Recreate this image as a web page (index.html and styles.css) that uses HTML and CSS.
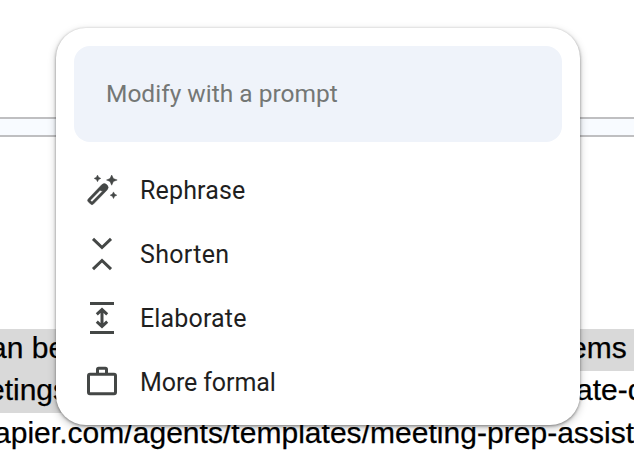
FILE: index.html
```html
<!DOCTYPE html>
<html lang="en">
<head>
  <meta charset="utf-8" />
  <title>Modify with a prompt</title>
  <link rel="stylesheet" href="styles.css">
</head>
<body>
  <div class="page">
    <div class="rule"></div>
    <div class="line selected"><span class="before">an be</span><span class="after up">ems</span></div>
    <div class="line"><span class="before half">etings</span><span class="after">ate-d</span></div>
    <div class="line url">apier.com/agents/templates/meeting-prep-assist</div>
  </div>

  <div class="popup">
    <div class="prompt">Modify with a prompt</div>
    <ul class="menu">
      <li>
        <svg class="icon wand" viewBox="0 -1.200 32 32">
          <path fill-rule="evenodd" d="M15.700 9.600Q18.300 7 20.900 9.600Q23.600 12.200 20.900 15L7.400 28.900Q6 30.300 4.600 28.900L2.200 26.500Q.8 25.100 2.200 23.700ZM14.100 15.100 4.700 24.700Q4.300 25.100 4.700 25.500L5.500 26.300Q5.900 26.700 6.300 26.300L16.900 15.600Q15.200 15.900 14.100 15.100Z"/>
          <path d="M25.700 -.2 27.400 3.400 31.200 4.800 27.400 6.200 25.700 10 24 6.200 20.500 4.800 24 3.400Z"/>
          <path d="M11.500 -.1 12.600 2.100 14.800 3.200 12.600 4.300 11.500 6.500 10.400 4.300 8.200 3.200 10.400 2.100Z"/>
          <path d="M27.500 16.700 28.600 18.900 30.800 20 28.600 21.100 27.500 23.300 26.400 21.100 24.200 20 26.400 18.900Z"/>
        </svg>
        <span>Rephrase</span>
      </li>
      <li>
        <svg class="icon stroke" viewBox="0 0 32 32">
          <path d="M7 .8 16 9.500 25 .8M7 31.200 16 22.500 25 31.200"/>
        </svg>
        <span class="wide">Shorten</span>
      </li>
      <li>
        <svg class="icon stroke" viewBox="0 0 32 32">
          <path d="M4 1.600H28M4 30.400H28M16 8V24M10.800 12.300 16 7.500 21.200 12.300M10.800 19.700 16 24.500 21.200 19.700"/>
        </svg>
        <span>Elaborate</span>
      </li>
      <li>
        <svg class="icon stroke" viewBox="0 0 32 32">
          <rect x="2.500" y="8.300" width="27" height="19.400" rx="1.500"/>
          <path d="M11.500 8V3.500Q11.500 2.300 12.700 2.300H19.300Q20.500 2.300 20.500 3.500V8"/>
        </svg>
        <span class="tight">More formal</span>
      </li>
    </ul>
  </div>
</body>
</html>
```

FILE: styles.css
```css
body {
  margin: 0;
  background: #fff;
  overflow: hidden;
}

/* document under the popup */
.page {
  height: 462px;
  overflow: hidden;
  padding-top: 117px;
  box-sizing: border-box;
  font: 30px/38px "Liberation Sans", Arial, sans-serif;
  color: #000;
  -webkit-text-stroke: .25px #000;
}

.rule {
  height: 16px;
  border-top: 2px solid #bfbfc1;
  border-bottom: 2px solid #bfbfc1;
  background: #f8fbff;
  margin-bottom: 192px;
}

.line {
  display: flex;
  justify-content: space-between;
  height: 42px;
  white-space: nowrap;
}

.selected,
.half {
  background: #d9d9d9;
}

.before {
  width: 300px;
  text-indent: -10px;
}

.half {
  text-indent: -12px;
}

.after {
  width: 58px;
}

.up {
  width: 64px;
}

.url {
  line-height: 40px;
  text-indent: -6px;
  letter-spacing: .03px;
}

.popup {
  position: absolute;
  top: 28px;
  left: 56px;
  width: 524px;
  height: 397px;
  box-sizing: border-box;
  padding: 18px;
  border-radius: 30px;
  background: #fff;
  box-shadow: 0 1px 3px rgba(0,0,0,.42), 0 3px 8px rgba(0,0,0,.22);
  font: 25px/30px Roboto, sans-serif;
  color: #1f1f1f;
}

.prompt {
  height: 96px;
  line-height: 96px;
  padding-left: 32px;
  border-radius: 16px;
  background: #eff3fa;
  color: #747775;
  font-size: 24.5px;
}

.menu {
  list-style: none;
  margin: 16px 0 0;
  padding: 0 0 0 12px;
  letter-spacing: .15px;
}

.menu li {
  display: flex;
  align-items: center;
  height: 64px;
}

.menu span {
  padding-top: 2px;
}

.menu .wide {
  letter-spacing: .3px;
}

.menu .tight {
  letter-spacing: -.1px;
}

.icon {
  width: 32px;
  height: 32px;
  margin-right: 22px;
  overflow: visible;
  fill: #444746;
}

.wand {
  stroke: #444746;
  stroke-width: .5;
}

.stroke {
  fill: none;
  stroke: #444746;
  stroke-width: 3;
}
```
